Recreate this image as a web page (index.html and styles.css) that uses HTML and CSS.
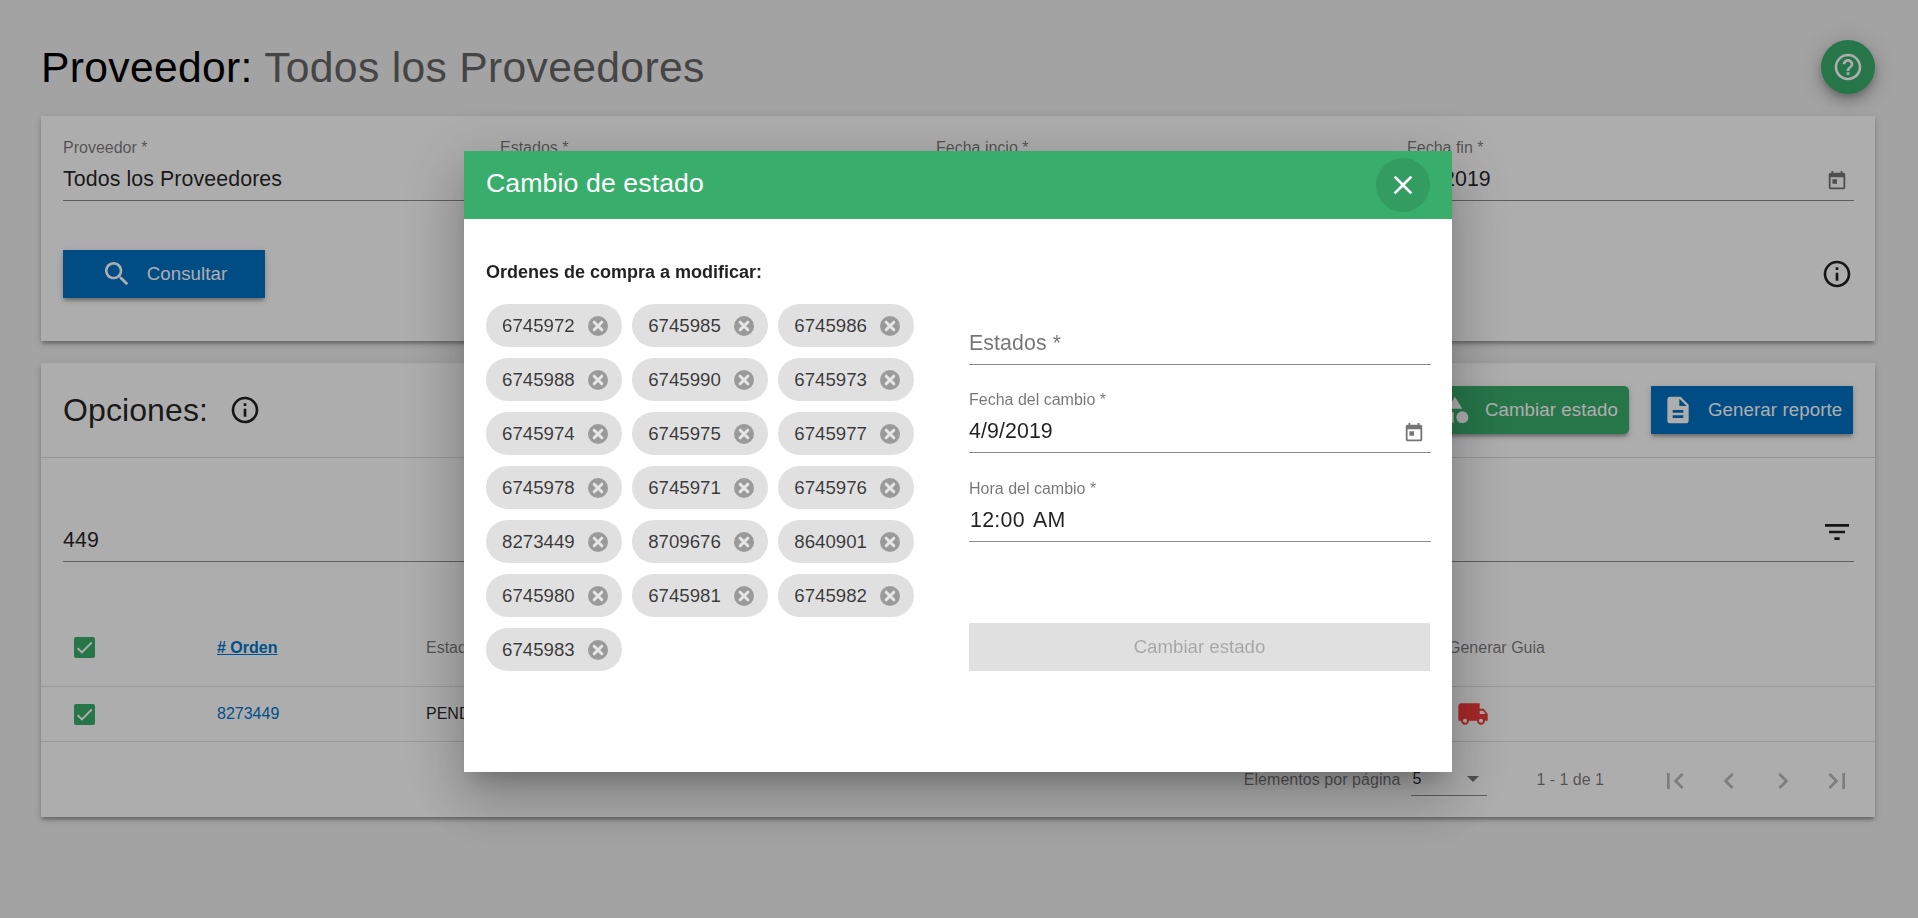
FILE: index.html
```html
<!DOCTYPE html>
<html lang="es">
<head>
<meta charset="utf-8">
<title>Proveedor</title>
<link rel="stylesheet" href="styles.css">
</head>
<body>
<svg class="sprite" aria-hidden="true">
  <symbol id="i-help" viewBox="0 0 24 24"><path d="M11 18h2v-2h-2v2zm1-16C6.48 2 2 6.48 2 12s4.48 10 10 10 10-4.48 10-10S17.52 2 12 2zm0 18c-4.41 0-8-3.59-8-8s3.59-8 8-8 8 3.59 8 8-3.59 8-8 8zm0-14c-2.21 0-4 1.79-4 4h2c0-1.1.9-2 2-2s2 .9 2 2c0 2-3 1.75-3 5h2c0-2.25 3-2.5 3-5 0-2.21-1.79-4-4-4z"/></symbol>
  <symbol id="i-info" viewBox="0 0 24 24"><path d="M11 7h2v2h-2zm0 4h2v6h-2zm1-9C6.48 2 2 6.48 2 12s4.48 10 10 10 10-4.48 10-10S17.52 2 12 2zm0 18c-4.41 0-8-3.59-8-8s3.59-8 8-8 8 3.59 8 8-3.59 8-8 8z"/></symbol>
  <symbol id="i-today" viewBox="0 0 24 24"><path d="M19 3h-1V1h-2v2H8V1H6v2H5c-1.11 0-1.99.9-1.99 2L3 19c0 1.1.89 2 2 2h14c1.1 0 2-.9 2-2V5c0-1.1-.9-2-2-2zm0 16H5V8h14v11zM7 10h5v5H7z"/></symbol>
  <symbol id="i-search" viewBox="0 0 24 24"><path d="M15.5 14h-.79l-.28-.27C15.41 12.59 16 11.11 16 9.5 16 5.91 13.09 3 9.5 3S3 5.91 3 9.5 5.91 16 9.5 16c1.61 0 3.09-.59 4.23-1.57l.27.28v.79l5 4.99L20.49 19l-4.99-5zm-6 0C7.01 14 5 11.99 5 9.5S7.01 5 9.5 5 14 7.01 14 9.5 11.99 14 9.5 14z"/></symbol>
  <symbol id="i-doc" viewBox="0 0 24 24"><path d="M14 2H6c-1.1 0-1.99.9-1.99 2L4 20c0 1.1.89 2 2 2h12c1.1 0 2-.9 2-2V8l-6-6zm2 16H8v-2h8v2zm0-4H8v-2h8v2zm-3-5V3.5L18.5 9H13z"/></symbol>
  <symbol id="i-category" viewBox="0 0 24 24"><path d="M12 2l-5.5 9h11z"/><circle cx="17.5" cy="17.5" r="4.5"/><path d="M3 13.5h8v8H3z"/></symbol>
  <symbol id="i-filter" viewBox="0 0 24 24"><path d="M10 18h4v-2h-4v2zM3 6v2h18V6H3zm3 7h12v-2H6v2z"/></symbol>
  <symbol id="i-check" viewBox="0 0 24 24"><path d="M4.1 12.7L9 17.6 20.3 6.3" fill="none" stroke="currentColor" stroke-width="2.2"/></symbol>
  <symbol id="i-truck" viewBox="0 0 24 24"><path d="M20 8h-3V4H3c-1.1 0-2 .9-2 2v11h2c0 1.66 1.34 3 3 3s3-1.34 3-3h6c0 1.66 1.34 3 3 3s3-1.34 3-3h2v-5l-3-4zM6 18.5c-.83 0-1.5-.67-1.5-1.5s.67-1.5 1.5-1.5 1.5.67 1.5 1.5-.67 1.5-1.5 1.5zm13.5-9l1.96 2.5H17V9.5h2.5zm-1.5 9c-.83 0-1.5-.67-1.5-1.5s.67-1.5 1.5-1.5 1.5.67 1.5 1.5-.67 1.5-1.5 1.5z"/></symbol>
  <symbol id="i-first" viewBox="0 0 24 24"><path d="M18.41 16.59L13.82 12l4.59-4.59L17 6l-6 6 6 6zM6 6h2v12H6z"/></symbol>
  <symbol id="i-prev" viewBox="0 0 24 24"><path d="M15.41 7.41L14 6l-6 6 6 6 1.41-1.41L10.83 12z"/></symbol>
  <symbol id="i-next" viewBox="0 0 24 24"><path d="M10 6L8.59 7.41 13.17 12l-4.58 4.59L10 18l6-6z"/></symbol>
  <symbol id="i-last" viewBox="0 0 24 24"><path d="M5.59 7.41L10.18 12l-4.59 4.59L7 18l6-6-6-6zM16 6h2v12h-2z"/></symbol>
  <symbol id="i-close" viewBox="0 0 24 24"><path d="M19 6.41L17.59 5 12 10.59 6.41 5 5 6.41 10.59 12 5 17.59 6.41 19 12 13.41 17.59 19 19 17.59 13.41 12z"/></symbol>
  <symbol id="i-cancel" viewBox="0 0 24 24"><circle cx="12" cy="12" r="10" fill="#9a9a9a"/><path d="M8.2 8.2l7.6 7.6M15.8 8.2l-7.6 7.6" fill="none" stroke="#e6e6e6" stroke-width="3" stroke-linecap="round"/></symbol>
</svg>

<main class="page">
  <header class="page-head">
    <h1 class="page-title">Proveedor: <span class="page-title-sub">Todos los Proveedores</span></h1>
    <button class="fab" type="button"><svg class="ic"><use href="#i-help"/></svg></button>
  </header>

  <section class="card card-filter">
    <div class="filter-grid">
      <div class="field"><div class="field-label">Proveedor *</div><div class="field-line"><span>Todos los Proveedores</span></div></div>
      <div class="field"><div class="field-label">Estados *</div><div class="field-line"><span></span></div></div>
      <div class="field"><div class="field-label">Fecha incio *</div><div class="field-line"><span>4/1/2019</span><svg class="ic-date"><use href="#i-today"/></svg></div></div>
      <div class="field"><div class="field-label">Fecha fin *</div><div class="field-line"><span>4/9/2019</span><svg class="ic-date"><use href="#i-today"/></svg></div></div>
    </div>
    <div class="filter-actions">
      <button class="btn btn-blue btn-consult" type="button"><svg class="ic"><use href="#i-search"/></svg>Consultar</button>
      <svg class="ic ic-dark"><use href="#i-info"/></svg>
    </div>
  </section>

  <section class="card card-table">
    <div class="options-head">
      <div class="options-title"><h2>Opciones:</h2><svg class="ic ic-dark"><use href="#i-info"/></svg></div>
      <div class="options-actions">
        <button class="btn btn-green" type="button"><svg class="ic"><use href="#i-category"/></svg>Cambiar estado</button>
        <button class="btn btn-blue btn-report" type="button"><svg class="ic"><use href="#i-doc"/></svg>Generar reporte</button>
      </div>
    </div>
    <div class="search-wrap">
      <div class="field-line"><span>449</span><svg class="ic ic-dark ic-filter"><use href="#i-filter"/></svg></div>
    </div>
    <div class="t-row t-head">
      <span class="check"><svg><use href="#i-check"/></svg></span>
      <a class="t-sort">&#35; Orden</a>
      <span>Estado</span>
      <span>Generar Guia</span>
    </div>
    <div class="t-row t-body">
      <span class="check"><svg><use href="#i-check"/></svg></span>
      <a class="t-link">8273449</a>
      <span>PENDIENTE</span>
      <span class="truck"><svg class="ic"><use href="#i-truck"/></svg></span>
    </div>
    <div class="paginator">
      <span class="pg-label">Elementos por página</span>
      <div class="pg-select"><span>5</span><i class="pg-arrow"></i></div>
      <span class="pg-range">1 - 1 de 1</span>
      <div class="pg-nav">
        <svg class="ic"><use href="#i-first"/></svg>
        <svg class="ic"><use href="#i-prev"/></svg>
        <svg class="ic"><use href="#i-next"/></svg>
        <svg class="ic"><use href="#i-last"/></svg>
      </div>
    </div>
  </section>
</main>

<div class="backdrop"></div>

<div class="modal" role="dialog">
  <div class="modal-head">
    <h2>Cambio de estado</h2>
    <button class="modal-close" type="button"><svg class="ic"><use href="#i-close"/></svg></button>
  </div>
  <div class="modal-body">
    <div>
      <h3 class="modal-sub">Ordenes de compra a modificar:</h3>
      <div class="chips">
        <span class="chip">6745972<svg><use href="#i-cancel"/></svg></span>
        <span class="chip">6745985<svg><use href="#i-cancel"/></svg></span>
        <span class="chip">6745986<svg><use href="#i-cancel"/></svg></span>
        <span class="chip">6745988<svg><use href="#i-cancel"/></svg></span>
        <span class="chip">6745990<svg><use href="#i-cancel"/></svg></span>
        <span class="chip">6745973<svg><use href="#i-cancel"/></svg></span>
        <span class="chip">6745974<svg><use href="#i-cancel"/></svg></span>
        <span class="chip">6745975<svg><use href="#i-cancel"/></svg></span>
        <span class="chip">6745977<svg><use href="#i-cancel"/></svg></span>
        <span class="chip">6745978<svg><use href="#i-cancel"/></svg></span>
        <span class="chip">6745971<svg><use href="#i-cancel"/></svg></span>
        <span class="chip">6745976<svg><use href="#i-cancel"/></svg></span>
        <span class="chip">8273449<svg><use href="#i-cancel"/></svg></span>
        <span class="chip">8709676<svg><use href="#i-cancel"/></svg></span>
        <span class="chip">8640901<svg><use href="#i-cancel"/></svg></span>
        <span class="chip">6745980<svg><use href="#i-cancel"/></svg></span>
        <span class="chip">6745981<svg><use href="#i-cancel"/></svg></span>
        <span class="chip">6745982<svg><use href="#i-cancel"/></svg></span>
        <span class="chip">6745983<svg><use href="#i-cancel"/></svg></span>
      </div>
    </div>
    <div class="modal-form">
      <div class="field-line m-states"><span class="placeholder">Estados *</span></div>
      <div class="field m-date"><div class="field-label">Fecha del cambio *</div><div class="field-line"><span>4/9/2019</span><svg class="ic-date"><use href="#i-today"/></svg></div></div>
      <div class="field m-time"><div class="field-label">Hora del cambio *</div><div class="field-line"><span class="time">12:00 AM</span></div></div>
      <button class="btn-disabled" type="button" disabled>Cambiar estado</button>
    </div>
  </div>
</div>
</body>
</html>
```

FILE: styles.css
```css
* { box-sizing: border-box; }
html, body { margin: 0; height: 100%; }
body {
  background: #f0f0f0;
  color: rgba(0,0,0,.87);
  font-family: "Liberation Sans", Arial, sans-serif;
  overflow: hidden;
}
.sprite { display: none; }
svg { fill: currentColor; display: block; flex: none; }
.ic { width: 32px; height: 32px; }
.ic-dark { color: rgba(0,0,0,.87); }
.ic-date { width: 22px; height: 22px; margin: 12px 6px 0 0; color: rgba(0,0,0,.54); }
button { font-family: inherit; border: 0; padding: 0; }

.page { padding: 40px 43px 0 41px; }
.page-head { display: flex; justify-content: space-between; align-items: center; height: 54px; }
.page-title { margin: 0; font-size: 42.67px; font-weight: 400; color: #000; letter-spacing: .31px; }
.page-title-sub { color: #666; }
.fab {
  width: 54px; height: 54px; border-radius: 50%;
  background: #39ae6c; color: #fff;
  display: flex; align-items: center; justify-content: center;
  box-shadow: 0 4px 6px -1px rgba(0,0,0,.2), 0 8px 13px 1px rgba(0,0,0,.14), 0 2px 24px 2px rgba(0,0,0,.12);
}

.card {
  background: #fff;
  box-shadow: 0 4px 3px -2px rgba(0,0,0,.2), 0 3px 4px 0 rgba(0,0,0,.14), 0 2px 8px 0 rgba(0,0,0,.12);
}
.card-filter { margin-top: 22px; height: 225px; padding: 22px 21px 0 22px; }
.card-table { margin-top: 22px; height: 454px; }

.filter-grid { display: grid; grid-template-columns: 417fr 416fr 451fr 447fr; column-gap: 20px; }
.field-label { font-size: 16px; line-height: 20px; color: rgba(0,0,0,.54); }
.field-line {
  display: flex; justify-content: space-between; align-items: flex-start;
  height: 43px; line-height: 42px; font-size: 21.33px; letter-spacing: .1px;
  border-bottom: 1px solid rgba(0,0,0,.45);
}
.filter-actions { display: flex; justify-content: space-between; align-items: center; margin-top: 49px; padding-right: 1px; }

.btn {
  display: flex; align-items: center; gap: 14px;
  height: 48px; padding: 0 11px; color: #fff;
  font-size: 18.67px; letter-spacing: .1px; white-space: nowrap;
  box-shadow: 0 4px 3px -2px rgba(0,0,0,.2), 0 3px 4px 0 rgba(0,0,0,.14), 0 2px 8px 0 rgba(0,0,0,.12);
}
.btn-blue { background: #0070c4; }
.btn-green { background: #39ae6c; border-radius: 5px; }
.btn-consult { width: 202px; justify-content: center; }
.btn-report { width: 202px; }

.options-head {
  display: flex; justify-content: space-between; align-items: center;
  height: 95px; padding: 0 22px 0 22px;
  border-bottom: 1px solid rgba(0,0,0,.14);
}
.options-title { display: flex; align-items: center; gap: 21px; }
.options-title h2 { margin: 0; font-size: 32px; font-weight: 400; letter-spacing: .1px; }
.options-actions { display: flex; gap: 22px; }

.search-wrap { padding: 61px 21px 47px 22px; }
.ic-filter { margin: -3px 1px 0 0; }

.t-row {
  display: grid; grid-template-columns: 143px 209px 1022px auto;
  align-items: center; padding-left: 33px;
  font-size: 16px; border-bottom: 1px solid rgba(0,0,0,.12);
}
.t-head { height: 78px; color: rgba(0,0,0,.54); }
.t-body { height: 55px; }
.check {
  width: 21px; height: 21px; border-radius: 2px;
  background: #39ae6c; color: #fff;
}
.check svg { width: 21px; height: 21px; }
.t-sort { color: #0076ce; font-weight: 700; text-decoration: underline; }
.t-link { color: #0076ce; }
.truck { color: #f53b3b; padding-left: 9px; }

.paginator {
  display: flex; justify-content: flex-end; align-items: center;
  height: 75px; padding-right: 11px;
  font-size: 16px; color: rgba(0,0,0,.54);
}
.pg-label { letter-spacing: .05px; }
.pg-select {
  display: flex; justify-content: space-between; align-items: center;
  width: 76px; height: 32px; margin: 0 0 0 11px; padding: 0 8px 0 1px;
  color: rgba(0,0,0,.87); border-bottom: 1px solid rgba(0,0,0,.45);
}
.pg-arrow {
  width: 0; height: 0;
  border-left: 6px solid transparent; border-right: 6px solid transparent;
  border-top: 6px solid rgba(0,0,0,.54);
}
.pg-range { margin: 0 44px 0 49px; }
.pg-nav { display: flex; color: rgba(0,0,0,.28); margin-top: 2px; }
.pg-nav svg { width: 32px; margin: 0 11px; }

.backdrop { position: fixed; inset: 0; background: rgba(0,0,0,.32); }

.modal {
  position: fixed; left: 464px; top: 151px;
  width: 988px; height: 621px;
  background: #fff;
  box-shadow: 0 15px 20px -9px rgba(0,0,0,.2), 0 32px 51px 4px rgba(0,0,0,.14), 0 12px 61px 11px rgba(0,0,0,.12);
}
.modal-head {
  display: flex; justify-content: space-between; align-items: center;
  height: 68px; padding: 0 22px;
  background: #39ae6c; color: #fff;
}
.modal-head h2 { margin: 0 0 4px; font-size: 26.67px; font-weight: 400; letter-spacing: .1px; }
.modal-close {
  width: 54px; height: 54px; border-radius: 50%;
  background: rgba(0,0,0,.1); color: #fff;
  display: flex; align-items: center; justify-content: center;
}
.modal-body {
  display: grid; grid-template-columns: 483px 462px;
  padding: 42px 0 0 22px;
}
.modal-sub { margin: 0 0 21px; font-size: 18px; line-height: 22px; font-weight: 700; }
.chips { display: flex; flex-wrap: wrap; gap: 11px 10.5px; width: 440px; }
.chip {
  display: inline-flex; align-items: center; gap: 11px;
  height: 43px; padding: 0 12px 0 16px; border-radius: 22px;
  background: #e0e0e0; font-size: 18.67px; color: rgba(0,0,0,.75);
}
.chip svg { width: 24px; height: 24px; }

.modal-form { padding-top: 61px; }
.placeholder { color: rgba(0,0,0,.54); }
.m-date { margin-top: 25px; }
.m-time { margin-top: 26px; }
.time { padding-left: 1px; word-spacing: 3px; letter-spacing: .3px; }
.btn-disabled {
  display: block; width: 461px; height: 48px; margin-top: 81px;
  background: #e0e0e0; color: rgba(0,0,0,.26); font-size: 18.67px;
}
```
